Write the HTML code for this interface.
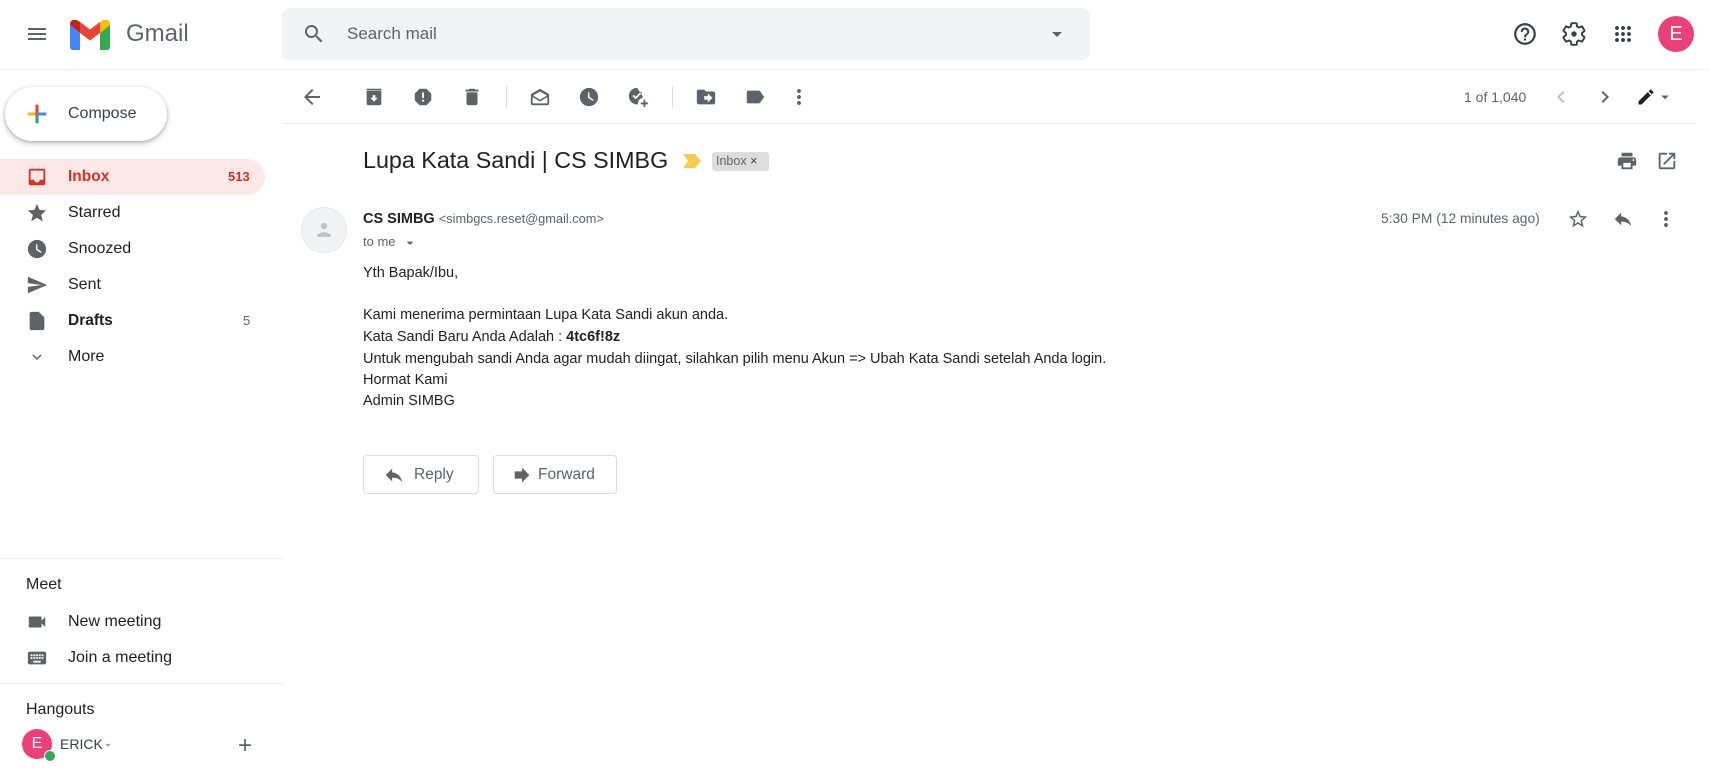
<!DOCTYPE html>
<html><head><meta charset="utf-8"><style>
*{margin:0;padding:0;box-sizing:border-box}
body{width:1710px;height:768px;overflow:hidden;background:#fff;font-family:"Liberation Sans",Arial,sans-serif;color:#202124;position:relative}
.a{position:absolute}
.ic{position:absolute;fill:#5f6368}
.nav{position:absolute;left:68px;font-size:16px;color:#202124}
.cnt{position:absolute;font-size:13px;color:#202124}
.body{position:absolute;left:363px;font-size:14.5px;color:#222}
</style></head><body>
<!-- header -->
<svg class="ic" style="left:25px;top:22px" width="24" height="24" viewBox="0 0 24 24"><path d="M3 18h18v-2H3v2zm0-5h18v-2H3v2zm0-7v2h18V6H3z"/></svg>
<svg class="a" style="left:70px;top:20px" width="40" height="30" viewBox="0 0 40 30">
<path d="M3 30h7V13L0 5v22c0 1.7 1.3 3 3 3z" fill="#4285f4"/>
<path d="M30 30h7c1.7 0 3-1.3 3-3V5l-10 8z" fill="#34a853"/>
<path d="M30 2v11l10-8V4c0-3.7-4.2-5.8-7.2-3.6z" fill="#fbbc04"/>
<path d="M10 13V2l10 7.5L30 2v11l-10 7.5z" fill="#ea4335"/>
<path d="M0 4v1l10 8V2L7.2.4C4.2-1.8 0 .3 0 4z" fill="#c5221f"/></svg>
<div class="a" style="left:126px;top:20px;font-size:24px;color:#5f6368">Gmail</div>
<div class="a" style="left:282px;top:8px;width:808px;height:52px;background:#f1f3f4;border-radius:8px"></div>
<svg class="ic" style="left:302px;top:22px" width="24" height="24" viewBox="0 0 24 24"><path d="M15.5 14h-.79l-.28-.27A6.47 6.47 0 0016 9.5 6.5 6.5 0 109.5 16c1.61 0 3.09-.59 4.23-1.57l.27.28v.79l5 4.99L20.49 19l-4.99-5zm-6 0C7.01 14 5 11.99 5 9.5S7.01 5 9.5 5 14 7.01 14 9.5 11.99 14 9.5 14z"/></svg>
<div class="a" style="left:347px;top:24px;font-size:17px;color:#5f6368">Search mail</div>
<svg class="ic" style="left:1045px;top:22px" width="24" height="24" viewBox="0 0 24 24"><path d="M7 10l5 5 5-5z"/></svg>
<svg class="a" style="left:1512px;top:21px" width="26" height="26" viewBox="0 0 24 24" fill="#3c4043"><path d="M11 18h2v-2h-2v2zm1-16C6.480 2 2 6.48 2 12s4.48 10 10 10 10-4.48 10-10S17.52 2 12 2zm0 18c-4.41 0-8-3.59-8-8s3.590-8 8-8 8 3.59 8 8-3.59 8-8 8zm0-14c-2.21 0-4 1.79-4 4h2c0-1.1.9-2 2-2s2 .9 2 2c0 2-3 1.75-3 5h2c0-2.25 3-2.5 3-5 0-2.21-1.79-4-4-4z"/></svg>
<svg class="a" style="left:1561px;top:21px" width="26" height="26" viewBox="0 0 24 24" fill="#3c4043"><path d="M19.43 12.98c.04-.32.07-.64.07-.98s-.03-.66-.07-.98l2.11-1.65c.19-.15.24-.42.12-.64l-2-3.46a.5.5 0 00-.61-.22l-2.49 1c-.52-.4-1.08-.73-1.690-.98l-.38-2.65A.49.49 0 0014 2h-4c-.25 0-.46.18-.49.42l-.38 2.65c-.61.25-1.170.59-1.690.98l-2.49-1a.5.5 0 00-.61.22l-2 3.46c-.13.22-.07.49.12.64l2.11 1.65c-.04.32-.07.65-.07.98s.03.66.07.98l-2.11 1.65c-.19.15-.24.42-.12.64l2 3.46c.12.22.39.3.61.22l2.49-1c.52.4 1.08.73 1.69.98l.38 2.65c.03.24.24.42.49.42h4c.25 0 .46-.18.49-.42l.38-2.65c.61-.25 1.17-.59 1.69-.98l2.49 1c.23.09.49 0 .61-.22l2-3.46c.12-.22.07-.49-.12-.64l-2.11-1.65z" fill="none" stroke="#3c4043" stroke-width="1.8"/><circle cx="12" cy="12" r="2.5"/></svg>
<svg class="a" style="left:1611px;top:22px" width="24" height="24" viewBox="0 0 24 24" fill="#3c4043"><path d="M6 8c1.1 0 2-.9 2-2s-.9-2-2-2-2 .9-2 2 .9 2 2 2zm6 12c1.1 0 2-.9 2-2s-.9-2-2-2-2 .9-2 2 .9 2 2 2zm-6 0c1.1 0 2-.9 2-2s-.9-2-2-2-2 .9-2 2 .9 2 2 2zm0-6c1.1 0 2-.9 2-2s-.9-2-2-2-2 .9-2 2 .9 2 2 2zm6 0c1.1 0 2-.9 2-2s-.9-2-2-2-2 .9-2 2 .9 2 2 2zm4-8c0 1.1.9 2 2 2s2-.9 2-2-.9-2-2-2-2 .9-2 2zm-4 2c1.1 0 2-.9 2-2s-.9-2-2-2-2 .9-2 2 .9 2 2 2zm6 6c1.1 0 2-.9 2-2s-.9-2-2-2-2 .9-2 2 .9 2 2 2zm0 6c1.1 0 2-.9 2-2s-.9-2-2-2-2 .9-2 2 .9 2 2 2z"/></svg>
<div class="a" style="left:1658px;top:16px;width:36px;height:36px;border-radius:50%;background:#ec407a;color:#fff;font-size:20px;text-align:center;line-height:36px">E</div>
<div class="a" style="left:0;top:69px;width:1710px;height:1px;background:#eceff1"></div>

<!-- sidebar -->
<div class="a" style="left:5px;top:87px;width:162px;height:54px;border-radius:27px;background:#fff;box-shadow:0 1px 3px rgba(60,64,67,.35),0 3px 6px 1px rgba(60,64,67,.15)"></div>
<svg class="a" style="left:23px;top:100px" width="28" height="28" viewBox="0 0 36 36"><path fill="#34a853" d="M16 16v14h4V20z"/><path fill="#4285f4" d="M30 16H20l-4 4h14z"/><path fill="#fbbc05" d="M6 16v4h10l4-4z"/><path fill="#ea4335" d="M20 16V6h-4v14z"/></svg>
<div class="a" style="left:68px;top:105px;font-size:16px;color:#3c4043">Compose</div>

<div class="a" style="left:0;top:159px;width:265px;height:36px;background:#fce8e6;border-radius:0 18px 18px 0"></div>
<svg class="a" style="left:26px;top:166px" width="22" height="22" viewBox="0 0 24 24" fill="#d93025"><path d="M19 3H4.99C3.88 3 3 3.9 3 5l.01 14c0 1.1.88 2 1.99 2H19c1.1 0 2-.9 2-2V5c0-1.1-.9-2-2-2zm0 12h-4c0 1.66-1.35 3-3 3s-3-1.34-3-3H4.99V5H19v10z"/></svg>
<div class="nav" style="top:168px;font-weight:bold;color:#d93025;font-size:15.5px">Inbox</div>
<div class="cnt" style="left:228px;top:169px;font-weight:bold;color:#d93025">513</div>

<svg class="ic" style="left:26px;top:202px" width="22" height="22" viewBox="0 0 24 24"><path d="M12 17.27L18.18 21l-1.64-7.03L22 9.24l-7.19-.61L12 2 9.19 8.63 2 9.24l5.46 4.73L5.82 21z"/></svg>
<div class="nav" style="top:204px">Starred</div>
<svg class="ic" style="left:26px;top:238px" width="22" height="22" viewBox="0 0 24 24"><path d="M12 2C6.5 2 2 6.5 2 12s4.5 10 10 10 10-4.5 10-10S17.5 2 12 2zm4.2 14.2L11 13V7h1.5v5.2l4.5 2.7-.8 1.3z"/></svg>
<div class="nav" style="top:240px">Snoozed</div>
<svg class="ic" style="left:26px;top:274px" width="22" height="22" viewBox="0 0 24 24"><path d="M2.01 21L23 12 2.01 3 2 10l15 2-15 2z"/></svg>
<div class="nav" style="top:276px">Sent</div>
<svg class="ic" style="left:26px;top:310px" width="22" height="22" viewBox="0 0 24 24"><path d="M14 2H6c-1.1 0-2 .9-2 2v16c0 1.1.9 2 2 2h12c1.1 0 2-.9 2-2V8l-6-6z"/></svg>
<div class="nav" style="top:312px;font-weight:bold;font-size:15.5px">Drafts</div>
<div class="cnt" style="left:243px;top:313px;color:#5f6368">5</div>
<svg class="ic" style="left:28px;top:348px" width="18" height="18" viewBox="0 0 24 24"><path d="M7.41 8.59L12 13.17l4.59-4.58L18 10l-6 6-6-6z"/></svg>
<div class="nav" style="top:348px">More</div>

<div class="a" style="left:0;top:558px;width:283px;height:1px;background:#eceff1"></div>
<div class="a" style="left:26px;top:576px;font-size:16px;color:#202124">Meet</div>
<svg class="ic" style="left:26px;top:611px" width="22" height="22" viewBox="0 0 24 24"><path d="M17 10.5V7c0-.55-.45-1-1-1H4c-.55 0-1 .45-1 1v10c0 .55.45 1 1 1h12c.55 0 1-.45 1-1v-3.5l4 4v-11l-4 4z"/></svg>
<div class="nav" style="top:613px">New meeting</div>
<svg class="ic" style="left:26px;top:647px" width="22" height="22" viewBox="0 0 24 24"><path d="M20 5H4c-1.1 0-1.99.9-1.99 2L2 17c0 1.1.9 2 2 2h16c1.1 0 2-.9 2-2V7c0-1.1-.9-2-2-2zm-9 3h2v2h-2V8zm0 3h2v2h-2v-2zM8 8h2v2H8V8zm0 3h2v2H8v-2zm-1 2H5v-2h2v2zm0-3H5V8h2v2zm9 7H8v-2h8v2zm0-4h-2v-2h2v2zm0-3h-2V8h2v2zm3 3h-2v-2h2v2zm0-3h-2V8h2v2z"/></svg>
<div class="nav" style="top:649px">Join a meeting</div>
<div class="a" style="left:0;top:683px;width:283px;height:1px;background:#eceff1"></div>
<div class="a" style="left:26px;top:701px;font-size:16px;color:#202124">Hangouts</div>
<div class="a" style="left:22px;top:729px;width:30px;height:30px;border-radius:50%;background:#ec407a;color:#fff;font-size:16px;text-align:center;line-height:30px">E</div>
<div class="a" style="left:44px;top:750px;width:12px;height:12px;border-radius:50%;background:#34a853;border:1px solid #fff"></div>
<div class="a" style="left:60px;top:736px;font-size:14px;color:#3c4043">ERICK</div>
<svg class="ic" style="left:101px;top:738px" width="14" height="14" viewBox="0 0 24 24"><path d="M7 10l5 5 5-5z" fill="#9aa0a6"/></svg>
<div class="a" style="left:238px;top:732px;font-size:24px;color:#5f6368;font-weight:300">+</div>

<!-- toolbar -->
<svg class="ic" style="left:300px;top:85px" width="24" height="24" viewBox="0 0 24 24"><path d="M20 11H7.83l5.59-5.59L12 4l-8 8 8 8 1.41-1.41L7.83 13H20v-2z"/></svg>
<svg class="ic" style="left:363px;top:86px" width="22" height="22" viewBox="0 0 24 24"><path d="M20 5H4v14c0 1.1.9 2 2 2h12c1.1 0 2-.9 2-2V5zm-8 12l-4-4h2.5v-3h3v3H16l-4 4zM4 3h16v1.5H4z"/></svg>
<svg class="ic" style="left:412px;top:86px" width="22" height="22" viewBox="0 0 24 24"><path d="M15.73 3H8.27L3 8.27v7.46L8.27 21h7.46L21 15.73V8.27L15.73 3zM13 17h-2v-2h2v2zm0-4h-2V7h2v6z"/></svg>
<svg class="ic" style="left:461px;top:86px" width="22" height="22" viewBox="0 0 24 24"><path d="M6 19c0 1.1.9 2 2 2h8c1.1 0 2-.9 2-2V7H6v12zM19 4h-3.5l-1-1h-5l-1 1H5v2h14V4z"/></svg>
<div class="a" style="left:506px;top:86px;width:1px;height:22px;background:#dadce0"></div>
<svg class="ic" style="left:529px;top:86px" width="22" height="22" viewBox="0 0 24 24"><path d="M21.99 10c0-.72-.37-1.35-.94-1.7L12 3 2.95 8.3C2.38 8.65 2 9.28 2 10v9c0 1.1.9 2 2 2h16c1.1 0 2-.9 2-2l-.01-9zM20 19H4v-7l8 5 8-5v7zm-8-4L4.5 10.3 12 6l7.5 4.3L12 15z"/></svg>
<svg class="ic" style="left:578px;top:86px" width="22" height="22" viewBox="0 0 24 24"><path d="M12 2C6.5 2 2 6.5 2 12s4.5 10 10 10 10-4.5 10-10S17.5 2 12 2zm4.2 14.2L11 13V7h1.5v5.2l4.5 2.7-.8 1.3z"/></svg>
<svg class="ic" style="left:627px;top:86px" width="22" height="22" viewBox="0 0 24 24"><path d="M11 2a9 9 0 100 18c.3 0 .6 0 .9-.05A6 6 0 0117 13.1c.1-.7.1-1.4 0-2.1zM9.5 14.5L6 11l1.4-1.4 2.1 2.1 5.6-5.6L16.5 7.5z"/><path d="M18 15h2v3h3v2h-3v3h-2v-3h-3v-2h3z"/></svg>
<div class="a" style="left:672px;top:86px;width:1px;height:22px;background:#dadce0"></div>
<svg class="ic" style="left:695px;top:86px" width="22" height="22" viewBox="0 0 24 24"><path d="M20 6h-8l-2-2H4c-1.1 0-2 .9-2 2v12c0 1.1.9 2 2 2h16c1.1 0 2-.9 2-2V8c0-1.1-.9-2-2-2zm-6 12v-3h-4v-4h4V8l5 5-5 5z"/></svg>
<svg class="ic" style="left:744px;top:86px" width="22" height="22" viewBox="0 0 24 24"><path d="M17.63 5.84C17.27 5.33 16.67 5 16 5L5 5.01C3.9 5.01 3 5.9 3 7v10c0 1.1.9 1.99 2 1.99L16 19c.67 0 1.27-.33 1.63-.84L22 12l-4.37-6.16z"/></svg>
<svg class="ic" style="left:787px;top:85px" width="24" height="24" viewBox="0 0 24 24"><path d="M12 8c1.1 0 2-.9 2-2s-.9-2-2-2-2 .9-2 2 .9 2 2 2zm0 2c-1.1 0-2 .9-2 2s.9 2 2 2 2-.9 2-2-.9-2-2-2zm0 6c-1.1 0-2 .9-2 2s.9 2 2 2 2-.9 2-2-.9-2-2-2z"/></svg>
<div class="a" style="left:1464px;top:89px;font-size:14px;color:#5f6368">1 of 1,040</div>
<svg class="ic" style="left:1549px;top:85px" width="24" height="24" viewBox="0 0 24 24"><path d="M15.41 7.41L14 6l-6 6 6 6 1.41-1.41L10.83 12z" fill="#bdc1c6"/></svg>
<svg class="ic" style="left:1593px;top:85px" width="24" height="24" viewBox="0 0 24 24"><path d="M10 6L8.59 7.41 13.17 12l-4.58 4.59L10 18l6-6z"/></svg>
<svg class="a" style="left:1636px;top:87px" width="20" height="20" viewBox="0 0 24 24" fill="#202124"><path d="M3 17.25V21h3.75L17.81 9.94l-3.75-3.75L3 17.25zM20.71 7.04a1 1 0 000-1.41l-2.34-2.34a1 1 0 00-1.41 0l-1.83 1.83 3.75 3.75 1.83-1.83z"/></svg>
<svg class="ic" style="left:1656px;top:88px" width="18" height="18" viewBox="0 0 24 24"><path d="M7 10l5 5 5-5z"/></svg>
<div class="a" style="left:283px;top:123px;width:1413px;height:1px;background:#eceff1"></div>

<!-- subject -->
<div class="a" style="left:363px;top:147px;font-size:23.3px;color:#202124">Lupa Kata Sandi | CS SIMBG</div>
<svg class="a" style="left:683px;top:154px" width="20" height="14" viewBox="0 0 20 14"><path d="M0 0h12l6 7-6 7H0l5-7z" fill="#f7cb4d"/></svg>
<div class="a" style="left:712px;top:152px;width:57px;height:19px;background:#ddd;border-radius:3px;font-size:12.5px;color:#666;line-height:19px;padding-left:4px">Inbox <span style="color:#444">×</span></div>
<svg class="ic" style="left:1616px;top:150px" width="22" height="22" viewBox="0 0 24 24"><path d="M19 8H5c-1.66 0-3 1.34-3 3v6h4v4h12v-4h4v-6c0-1.66-1.34-3-3-3zm-3 11H8v-5h8v5zm3-7c-.55 0-1-.45-1-1s.45-1 1-1 1 .45 1 1-.45 1-1 1zm-1-9H6v4h12V3z"/></svg>
<svg class="ic" style="left:1656px;top:150px" width="22" height="22" viewBox="0 0 24 24"><path d="M19 19H5V5h7V3H5a2 2 0 00-2 2v14a2 2 0 002 2h14c1.1 0 2-.9 2-2v-7h-2v7zM14 3v2h3.59l-9.83 9.83 1.41 1.41L19 6.41V10h2V3h-7z"/></svg>

<!-- message -->
<div class="a" style="left:301px;top:207px;width:46px;height:46px;border-radius:50%;background:#f1f3f4;border:1px solid #e8eaed"></div>
<svg class="a" style="left:312px;top:218px" width="24" height="24" viewBox="0 0 24 24" fill="#c0c4c8"><circle cx="12" cy="8" r="3.2"/><path d="M5 18c0-2.5 4.5-3.8 7-3.8s7 1.3 7 3.8v1H5z"/></svg>
<div class="a" style="left:363px;top:211px;font-size:14.5px;font-weight:bold;color:#202124">CS SIMBG <span style="font-weight:normal;font-size:12.8px;color:#5f6368">&lt;simbgcs.reset@gmail.com&gt;</span></div>
<div class="a" style="left:363px;top:234px;font-size:13px;color:#5f6368">to me</div>
<svg class="ic" style="left:402px;top:235px" width="16" height="16" viewBox="0 0 24 24"><path d="M7 10l5 5 5-5z"/></svg>
<div class="a" style="left:1381px;top:211px;font-size:13.8px;color:#5f6368">5:30 PM (12 minutes ago)</div>
<svg class="ic" style="left:1567px;top:208px" width="22" height="22" viewBox="0 0 24 24"><path d="M22 9.24l-7.19-.62L12 2 9.19 8.63 2 9.24l5.46 4.73L5.82 21 12 17.27 18.18 21l-1.63-7.03L22 9.24zM12 15.4l-3.76 2.27 1-4.28-3.32-2.88 4.38-.38L12 6.1l1.71 4.04 4.38.38-3.32 2.88 1 4.28L12 15.4z"/></svg>
<svg class="ic" style="left:1612px;top:208px" width="22" height="22" viewBox="0 0 24 24"><path d="M10 9V5l-7 7 7 7v-4.1c5 0 8.5 1.6 11 5.1-1-5-4-10-11-11z"/></svg>
<svg class="ic" style="left:1654px;top:207px" width="24" height="24" viewBox="0 0 24 24"><path d="M12 8c1.1 0 2-.9 2-2s-.9-2-2-2-2 .9-2 2 .9 2 2 2zm0 2c-1.1 0-2 .9-2 2s.9 2 2 2 2-.9 2-2-.9-2-2-2zm0 6c-1.1 0-2 .9-2 2s.9 2 2 2 2-.9 2-2-.9-2-2-2z"/></svg>

<div class="body" style="top:265px">Yth Bapak/Ibu,</div>
<div class="body" style="top:307px">Kami menerima permintaan Lupa Kata Sandi akun anda.</div>
<div class="body" style="top:329px">Kata Sandi Baru Anda Adalah : <b>4tc6f!8z</b></div>
<div class="body" style="top:351px">Untuk mengubah sandi Anda agar mudah diingat, silahkan pilih menu Akun =&gt; Ubah Kata Sandi setelah Anda login.</div>
<div class="body" style="top:372px">Hormat Kami</div>
<div class="body" style="top:393px">Admin SIMBG</div>

<div class="a" style="left:363px;top:455px;width:116px;height:39px;border:1px solid #dadce0;border-radius:4px"></div>
<svg class="ic" style="left:383px;top:464px" width="22" height="22" viewBox="0 0 24 24"><path d="M10 9V5l-7 7 7 7v-4.1c5 0 8.5 1.6 11 5.1-1-5-4-10-11-11z"/></svg>
<div class="a" style="left:414px;top:466px;font-size:15.5px;color:#5f6368">Reply</div>
<div class="a" style="left:493px;top:455px;width:124px;height:39px;border:1px solid #dadce0;border-radius:4px"></div>
<svg class="ic" style="left:511px;top:464px" width="22" height="22" viewBox="0 0 24 24"><path d="M12 8V4l8 8-8 8v-4H4V8z"/></svg>
<div class="a" style="left:538px;top:466px;font-size:15.5px;color:#5f6368">Forward</div>
</body></html>
